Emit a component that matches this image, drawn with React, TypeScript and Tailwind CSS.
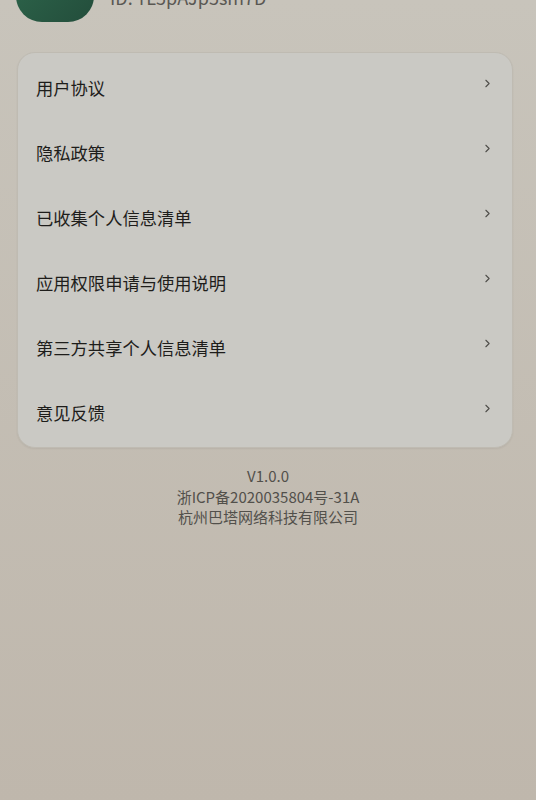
import { ChevronRight } from 'lucide-react'

const items = [
  '用户协议',
  '隐私政策',
  '已收集个人信息清单',
  '应用权限申请与使用说明',
  '第三方共享个人信息清单',
  '意见反馈',
]

export default function App() {
  return (
    <div
      className="min-h-[800px] w-full overflow-hidden bg-gradient-to-b from-[#c8c4bb] to-[#bfb7ac]"
      style={{ fontFamily: '"Noto Sans CJK SC", "Noto Sans", sans-serif' }}
    >
      {/* 头部 */}
      <div className="-mt-[56px] flex h-[78px] items-start gap-4 pl-4">
        <div className="h-[78px] w-[78px] shrink-0 rounded-[26px] bg-gradient-to-br from-[#2f6a4e] to-[#234d3b]" />
        <div className="mt-[43px] text-[18px] leading-[20px] text-[#5a5853]">ID: YL5pAJp5sm7D</div>
      </div>

      <div className="pl-[17px] pr-[23px] pt-[30px]">
        <div className="rounded-[18px] border border-[#bfbbb2] bg-[#cac9c4] py-[2px] shadow-[0_1px_2px_rgba(0,0,0,0.06)]">
          {items.map(label => (
            <div key={label} className="flex h-[65px] items-center justify-between pl-[18px] pr-[18px]">
              <span className="text-[17.3px] leading-none text-[#1e1d1b]">{label}</span>
              <ChevronRight size={13} strokeWidth={2} className="-mt-2 text-[#4f4e4a]" />
            </div>
          ))}
        </div>
      </div>

      <div className="mt-[18px] flex flex-col items-center text-[15px] leading-[20.5px] text-[#52504b]">
        <p>V1.0.0</p>
        <p>浙ICP备2020035804号-31A</p>
        <p>杭州巴塔网络科技有限公司</p>
      </div>
    </div>
  )
}
